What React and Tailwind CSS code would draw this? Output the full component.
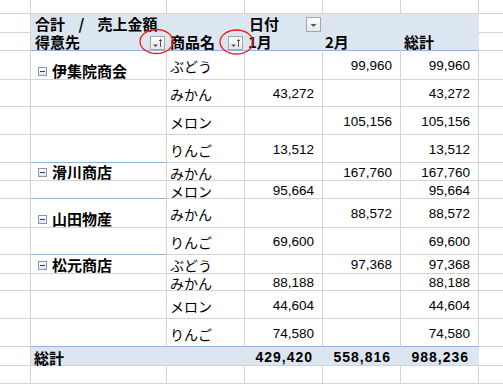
const jp = "font-['Noto_Sans_CJK_JP',sans-serif]";
const num = "font-['Liberation_Sans',sans-serif] text-[13.5px]";

const groups = [
  {
    name: '伊集院商会',
    rows: [
      ['ぶどう', '', '99,960', '99,960', 'h-[29px]'],
      ['みかん', '43,272', '', '43,272', 'h-[27px]'],
      ['メロン', '', '105,156', '105,156', 'h-[28px]'],
      ['りんご', '13,512', '', '13,512', 'h-[28px]'],
    ],
  },
  {
    name: '滑川商店',
    rows: [
      ['みかん', '', '167,760', '167,760', 'h-[18px]'],
      ['メロン', '95,664', '', '95,664', 'h-[18px]'],
    ],
  },
  {
    name: '山田物産',
    rows: [
      ['みかん', '', '88,572', '88,572', 'h-[29px]'],
      ['りんご', '69,600', '', '69,600', 'h-[27px]'],
    ],
  },
  {
    name: '松元商店',
    rows: [
      ['ぶどう', '', '97,368', '97,368', 'h-[19px]'],
      ['みかん', '88,188', '', '88,188', 'h-[17px]'],
      ['メロン', '44,604', '', '44,604', 'h-[28px]'],
      ['りんご', '74,580', '', '74,580', 'h-[28px]'],
    ],
  },
];

const GRAY = 'border-[#d4d4d4]';
const BLUE = 'border-[#95b3d7]';

function Cell({ w, className = '', children }) {
  return (
    <div className={`${w} shrink-0 box-border border-r border-b flex min-w-0 ${className}`}>
      {children}
    </div>
  );
}

function FilterBtn() {
  return (
    <span className="relative w-[15px] h-[14px] box-border border border-[#a6a6a6] bg-gradient-to-b from-white to-[#e6e6e6] shrink-0">
      <svg width="13" height="12" viewBox="0 0 13 12" className="absolute left-0 top-0">
        <path d="M2 7.5h5l-2.5 2.5z" fill="#555" />
        <path d="M9.5 2.5v7.5M8 4l1.5-1.5L11 4" stroke="#555" strokeWidth="1" fill="none" />
      </svg>
    </span>
  );
}

function DropBtn() {
  return (
    <span className="relative w-[15px] h-[15px] box-border border border-[#a6a6a6] bg-gradient-to-b from-white to-[#e6e6e6] shrink-0">
      <svg width="13" height="13" viewBox="0 0 13 13" className="absolute left-0 top-0">
        <path d="M3.5 6h6l-3 3z" fill="#555" />
      </svg>
    </span>
  );
}

function Collapse() {
  return (
    <span className="w-[9px] h-[9px] box-border border border-[#8797b3] bg-gradient-to-b from-white to-[#dfe5ef] flex items-center justify-center shrink-0 mb-[2px]">
      <span className="w-[5px] h-[1px] bg-[#2c3f63]" />
    </span>
  );
}

function Blank({ h }) {
  return (
    <div className={`flex ${h}`}>
      <Cell w="w-[31px]" className={GRAY} />
      <Cell w="w-[136px]" className={GRAY} />
      <Cell w="w-[78px]" className={GRAY} />
      <Cell w="w-[78px]" className={GRAY} />
      <Cell w="w-[78px]" className={GRAY} />
      <Cell w="w-[78px]" className={GRAY} />
      <div className={`flex-1 box-border border-b ${GRAY}`} />
    </div>
  );
}

function NumCell({ v, bottom }) {
  return (
    <Cell w="w-[78px]" className={`border-r-[#d4d4d4] ${bottom} items-center justify-end pr-[8px] pt-[2px]`}>
      <span className={`${num} leading-none`}>{v}</span>
    </Cell>
  );
}

export default function App() {
  const total = groups.reduce((n, g) => n + g.rows.length, 0);
  let idx = 0;

  const head = 'bg-[#dce6f1] border-r-[#dce6f1]';
  const hText = `${jp} text-[15px] font-bold leading-none`;

  return (
    <div className="relative w-[503px] h-[384px] overflow-hidden bg-white text-black">
      <Blank h="h-[14px]" />

      {/* 見出し 1段目 */}
      <div className="flex h-[19px]">
        <Cell w="w-[31px]" className={GRAY} />
        <Cell w="w-[136px]" className={`${head} border-b-[#dce6f1] items-end pb-[1px] pl-[4px]`}>
          <span className={`${hText} whitespace-nowrap [word-spacing:10px]`}>合計 / 売上金額</span>
        </Cell>
        <Cell w="w-[78px]" className={`${head} border-b-[#dce6f1]`} />
        <Cell w="w-[78px]" className={`${head} border-b-[#dce6f1] items-end justify-between pl-[4px] pr-[1px]`}>
          <span className={`${hText} pb-[1px]`}>日付</span>
          <DropBtn />
        </Cell>
        <Cell w="w-[78px]" className={`${head} border-b-[#dce6f1]`} />
        <Cell w="w-[78px]" className={`${head} border-b-[#dce6f1]`} />
        <div className={`flex-1 box-border border-b ${GRAY}`} />
      </div>

      {/* 見出し 2段目 */}
      <div className="flex h-[18px]">
        <Cell w="w-[31px]" className={GRAY} />
        <Cell w="w-[136px]" className={`${head} border-b-[#95b3d7] items-end justify-between pl-[4px] pr-[1px]`}>
          <span className={`${hText} pb-[1px]`}>得意先</span>
          <FilterBtn />
        </Cell>
        <Cell w="w-[78px]" className={`${head} border-b-[#95b3d7] items-end justify-between pl-[3px] pr-[1px]`}>
          <span className={`${hText} pb-[1px]`}>商品名</span>
          <FilterBtn />
        </Cell>
        <Cell w="w-[78px]" className={`${head} border-b-[#95b3d7] items-end pl-[3px] pb-[1px]`}>
          <span className={hText}>1月</span>
        </Cell>
        <Cell w="w-[78px]" className={`${head} border-b-[#95b3d7] items-end pl-[2px] pb-[1px]`}>
          <span className={hText}>2月</span>
        </Cell>
        <Cell w="w-[78px]" className={`${head} border-b-[#95b3d7] items-end pl-[3px] pb-[1px]`}>
          <span className={hText}>総計</span>
        </Cell>
        <div className={`flex-1 box-border border-b ${GRAY}`} />
      </div>

      {/* 明細 */}
      {groups.map((g, gi) =>
        g.rows.map((r, i) => {
          idx += 1;
          const lastAll = idx === total;
          const lastInGroup = i === g.rows.length - 1;
          const bB = lastInGroup ? 'border-b-[#95b3d7]' : 'border-b-[#d4d4d4]';
          const bData = lastAll ? 'border-b-[#95b3d7]' : 'border-b-[#d4d4d4]';
          return (
            <div key={`${gi}-${i}`} className={`flex ${r[4]}`}>
              <Cell w="w-[31px]" className={GRAY} />
              <Cell w="w-[136px]" className={`border-r-[#d4d4d4] ${bB} items-end pl-[7px] pb-[1px]`}>
                {i === 0 && (
                  <span className="flex items-end gap-[5px]">
                    <Collapse />
                    <span className={hText}>{g.name}</span>
                  </span>
                )}
              </Cell>
              <Cell w="w-[78px]" className={`border-r-[#d4d4d4] ${bData} items-center pl-[3px] pt-[2px]`}>
                <span className={`${jp} text-[14px] leading-none`}>{r[0]}</span>
              </Cell>
              <NumCell v={r[1]} bottom={bData} />
              <NumCell v={r[2]} bottom={bData} />
              <NumCell v={r[3]} bottom={bData} />
              <div className={`flex-1 box-border border-b ${GRAY}`} />
            </div>
          );
        })
      )}

      {/* 総計 */}
      <div className="flex h-[19px]">
        <Cell w="w-[31px]" className={GRAY} />
        <Cell w="w-[136px]" className={`${head} border-b-[#d4d4d4] items-center pl-[3px] pt-[2px]`}>
          <span className={hText}>総計</span>
        </Cell>
        <Cell w="w-[78px]" className={`${head} border-b-[#d4d4d4]`} />
        {['429,420', '558,816', '988,236'].map((v) => (
          <Cell key={v} w="w-[78px]" className={`${head} border-b-[#d4d4d4] items-center justify-end pr-[9px] pt-[2px]`}>
            <span className="font-['Liberation_Sans',sans-serif] text-[14px] font-bold leading-none tracking-[1px]">{v}</span>
          </Cell>
        ))}
        <div className={`flex-1 box-border border-b ${GRAY}`} />
      </div>

      <Blank h="h-[18px]" />
      <Blank h="h-[18px]" />

      {/* 赤い丸印 */}
      <svg className="absolute left-0 top-0 pointer-events-none" width="503" height="384">
        <ellipse cx="156.5" cy="41.5" rx="16.5" ry="12" fill="none" stroke="#ee1c1c" strokeWidth="1.3" />
        <ellipse cx="236.5" cy="42" rx="16.5" ry="12" fill="none" stroke="#ee1c1c" strokeWidth="1.3" />
      </svg>
    </div>
  );
}
